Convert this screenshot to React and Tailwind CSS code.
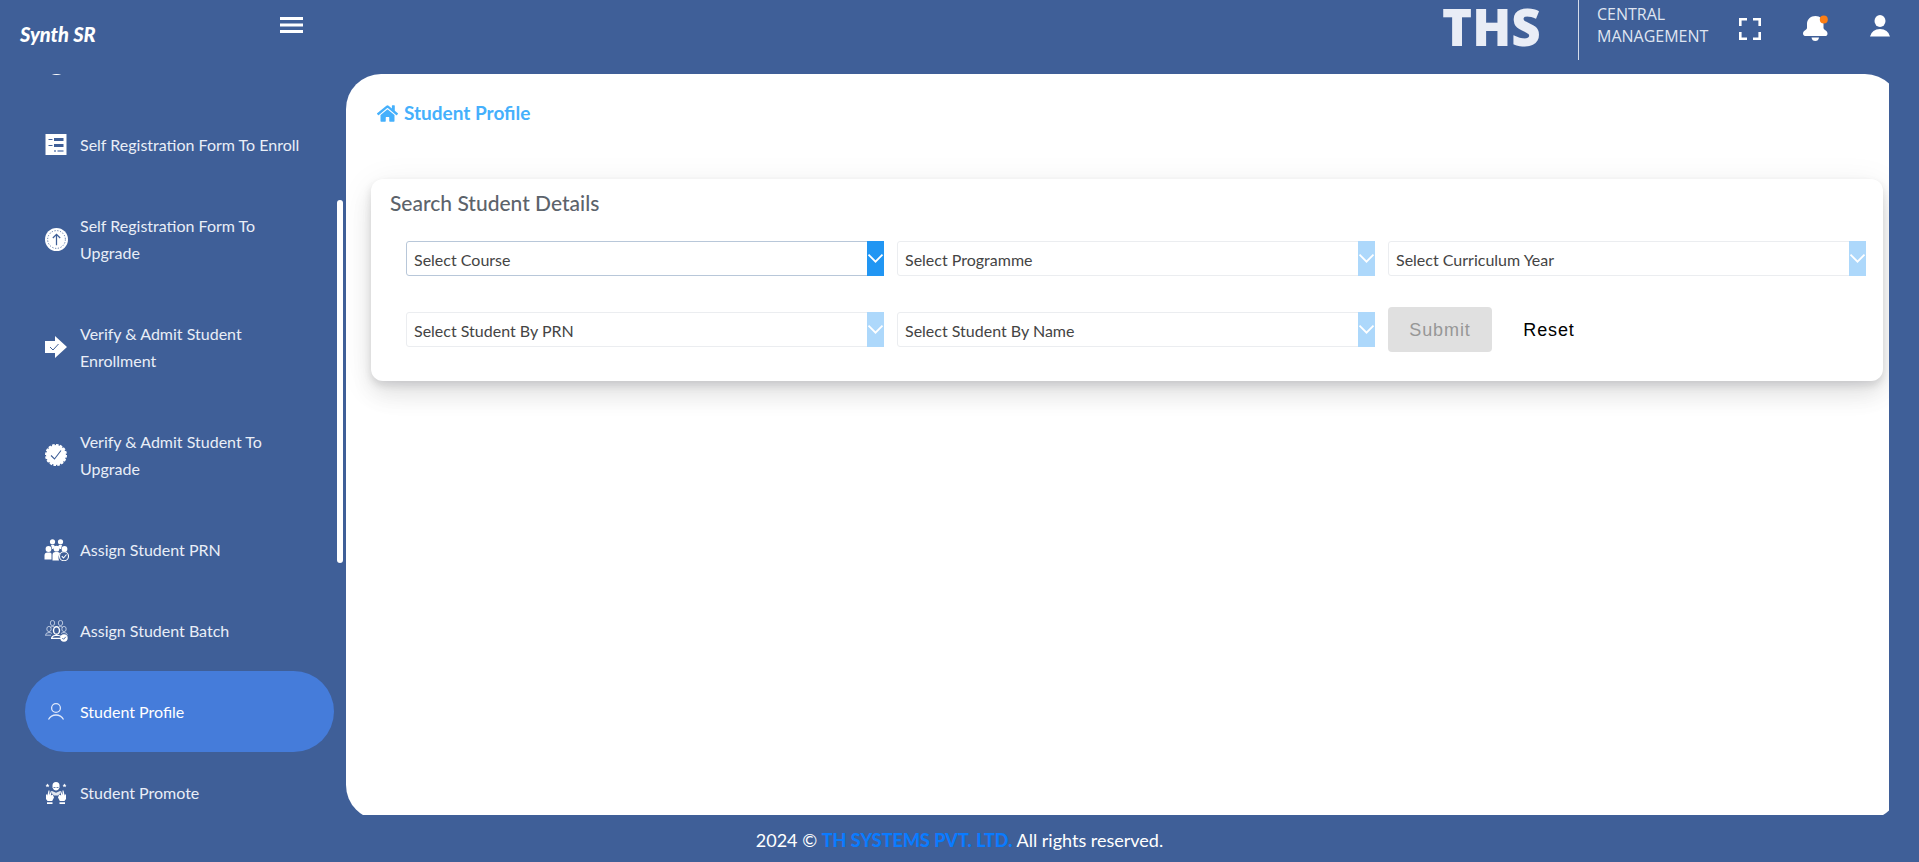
import React, { useState } from 'react';
import { FaHome } from 'react-icons/fa';

const font = "font-['Lato','Open_Sans',sans-serif]";

// Sidebar icons
const FormIcon = () => (
    <svg className="w-[22px] h-[22px] shrink-0" viewBox="0 0 22 22">
        <path fill="#fff" d="M.5 0h21v21H.5z" />
        <path stroke="#3f5f98" strokeWidth="1.2" d="M3.500 5.500h4M3.500 11.500h4" />
        <path stroke="#3f5f98" strokeWidth="3" d="M9 5.500h9.500M9 11.500h9.500" />
        <path stroke="#8da2c8" strokeWidth="2" d="M9 17h2M12.500 17h6" />
    </svg>
);

const UpgradeIcon = () => (
    <svg className="w-[23px] h-[23px] shrink-0" viewBox="0 0 22 22" fill="none">
        <circle cx="11" cy="11" r="11" fill="#fff" />
        <circle cx="11" cy="11" r="8.5" stroke="#3f5f98" strokeWidth=".8" strokeDasharray="1.2 1.5" />
        <path stroke="#3f5f98" strokeWidth="1.2" d="M11 16.500V6.500M7.500 9.500L11 6l3.500 3.500" />
    </svg>
);

const ArrowCheckIcon = () => (
    <svg className="w-[22px] h-[22px] shrink-0" viewBox="0 0 22 22" fill="none">
        <path fill="#fff" d="M0 5h10V0l12 11-12 11v-5H0z" />
        <path stroke="#3f5f98" strokeWidth="1" d="M5 11l3 3 5.500-6" />
    </svg>
);

const BadgeCheckIcon = () => (
    <svg className="w-[22px] h-[22px] shrink-0" viewBox="0 0 22 22" fill="none">
        <circle cx="11" cy="11" r="10" fill="#fff" />
        <circle cx="11" cy="11" r="10" stroke="#fff" strokeWidth="2" strokeDasharray="2.6 1.300" />
        <path stroke="#3f5f98" strokeWidth="1.1" d="M6 11.500l3.500 3.500 6.500-8.500" />
    </svg>
);

const GroupSolidIcon = () => (
    <svg className="-ml-px w-[25px] h-[22px] shrink-0" viewBox="0 0 24 22" fill="#fff">
        <circle cx="8" cy="2.800" r="2.600" />
        <circle cx="16" cy="2.800" r="2.600" />
        <path d="M6.500 6h3l1 1.500-1.800 2.500h-1zM14.500 6h3l-1 4h-1.200L13.500 7.500z" />
        <circle cx="4" cy="10" r="2.900" />
        <circle cx="12" cy="9.700" r="2.900" />
        <circle cx="20" cy="10" r="2.900" />
        <path d="M0 20.500v-4q0-3 3-3h2.500q1.500 0 1.500 1.500v5.500zM8 21.500V16q0-3 3-3h2q2 0 2.500 1.500-2.500 3-1 7z" />
        <circle cx="19.500" cy="17.200" r="4.500" fill="#3f5f98" stroke="#fff" strokeWidth="1.100" />
        <path fill="none" stroke="#fff" strokeWidth="1.100" d="M17.300 17.200l1.700 1.800 3-3.500" />
    </svg>
);

const GroupOutlineIcon = () => (
    <svg className="w-[23px] h-[22px] shrink-0" viewBox="0 0 23 22" fill="none" stroke="#c5d1e6" strokeWidth=".9">
        <ellipse cx="7.500" cy="3" rx="2.200" ry="2.600" />
        <ellipse cx="15.500" cy="3" rx="2.200" ry="2.600" />
        <path d="M5 7.500q2.500-2 4.500-.5M13.500 7q2-1.500 4.500.5" />
        <ellipse cx="4" cy="9" rx="2.200" ry="2.600" />
        <ellipse cx="19" cy="9" rx="2.200" ry="2.600" />
        <path d="M.5 15.500q0-3 3.500-3 2 0 3 1M.5 15.200H6M16 13.500q1-1 3-1 3 0 3.500 2.700" />
        <ellipse cx="11.500" cy="10.500" rx="3" ry="3.800" stroke="#fff" strokeWidth="1.400" />
        <path d="M6.500 18.500q.5-3 3.500-3h3.500q2 0 3 1.500M6 18.300h10" stroke="#fff" strokeWidth="1.200" />
        <circle cx="19" cy="18" r="3.700" fill="#fff" stroke="none" />
        <path stroke="#3f5f98" d="M17.300 18l1.300 1.300 2.200-2.500" />
    </svg>
);

const ProfileIcon = () => (
    <svg className="w-[22px] h-[22px] shrink-0" viewBox="0 0 22 22" fill="none" stroke="#dfe8fa" strokeWidth="1.300">
        <circle cx="11" cy="7" r="4.400" />
        <path d="M3.500 18.500Q6 14 11 14t7.500 4.500" />
    </svg>
);

const PromoteIcon = () => (
    <svg className="w-[22px] h-[22px] shrink-0" viewBox="0 0 22 22" fill="#fff">
        <path d="M7.500 3.500q0-3.500 3.500-3.500t3.500 3.500v2q-1 3-3.500 3t-3.500-3z" />
        <path stroke="#3f5f98" strokeWidth=".8" d="M8.500 5.500h2M11.500 5.500h2" />
        <path opacity=".85" d="M7 9l4 1.800L15 9l.5 2-2.500 2.500H9L6.500 11z" />
        <path d="M2.500 1.500l.6 1.200 1.400.2-1 .9.300 1.400-1.300-.7-1.200.7.200-1.400-1-.9 1.400-.2zM19.500 1.500l.6 1.200 1.400.2-1 .9.300 1.400-1.300-.7-1.200.7.200-1.400-1-.9 1.400-.2z" />
        <path d="M1 12.500h1.300V14L3.500 8.500h1L4.300 13 6 9h.8l-1 4.500 2-1 1.200 3-1.800 3.500H2.500L1 17zM21 12.500h-1.300V14l-1.200-5.500h-1l.2 4.500L16 9h-.8l1 4.500-2-1-1.200 3 1.800 3.500h4.700L21 17zM2 20.300h5.500V22H2zM14.500 20.300H20V22h-5.500z" />
    </svg>
);

const menuItems = [
    { label: 'Self Registration Form To Enroll', icon: FormIcon },
    { label: 'Self Registration Form To Upgrade', icon: UpgradeIcon },
    { label: 'Verify & Admit Student Enrollment', icon: ArrowCheckIcon },
    { label: 'Verify & Admit Student To Upgrade', icon: BadgeCheckIcon },
    { label: 'Assign Student PRN', icon: GroupSolidIcon },
    { label: 'Assign Student Batch', icon: GroupOutlineIcon },
    { label: 'Student Profile', icon: ProfileIcon, active: true },
    { label: 'Student Promote', icon: PromoteIcon },
];

function Header() {
    return (
        <header className="h-[74px] shrink-0 flex items-start justify-between text-white">
            <div className="w-[303px] pl-5 flex items-start justify-between">
                <span className="pt-5 text-xl leading-7 font-black italic">Synth SR</span>
                <button aria-label="Toggle menu" className="mt-[17px]">
                    <svg className="w-[23px] h-4" viewBox="0 0 23 16" stroke="#fff" strokeWidth="3">
                        <path d="M0 1.500h23M0 8h23M0 14.500h23" />
                    </svg>
                </button>
            </div>

            <div className="flex items-start pr-[29px]">
                <span className="w-[136px] font-['Open_Sans','Noto_Sans',sans-serif] text-[51px] leading-[52px] font-extrabold text-[#e9edf6]">THS</span>
                <div className="h-[60px] border-l border-[#d5dcea] pl-[18px] pt-[3px] w-[161px] font-['Open_Sans','Noto_Sans',sans-serif] text-base leading-[22px] text-[#dfe5f1]">
                    CENTRAL<br />MANAGEMENT
                </div>
                <button aria-label="Full screen" className="mt-[18px]">
                    <svg className="w-[22px] h-[22px]" viewBox="0 0 22 22" fill="none" stroke="#fff" strokeWidth="2.600">
                        <path d="M1.300 8V1.300H8M14 1.300h6.700V8M20.700 14v6.700H14M8 20.700H1.300V14" />
                    </svg>
                </button>
                <button aria-label="Notifications" className="mt-[15px] ml-[42px]">
                    <svg className="w-[25px] h-[26px]" viewBox="0 0 25 26">
                        <path fill="#fff" d="M12.500 1C7.500 1 4 4.500 4 9v4q0 1-1.500 2C1 16 0 17 0 18.500 0 20.500 1.500 21 3 21h19c1.500 0 2.500-.5 2.500-2.500 0-1.500-1-2.500-2.500-3.500q-1.500-1-1.500-2V9c0-4.500-3.500-8-8-8zM8.500 22.500h7.500q-.5 3.500-3.700 3.500t-3.800-3.500z" />
                        <circle cx="20.800" cy="4.500" r="4" fill="#fd7e14" />
                    </svg>
                </button>
                <button aria-label="Account" className="mt-[15px] ml-[42px]">
                    <svg className="w-5 h-[22px]" viewBox="0 0 20 22" fill="#fff">
                        <ellipse cx="10" cy="6" rx="5.500" ry="6" />
                        <path d="M0 21.500Q2 14 10 14t10 7.500z" />
                    </svg>
                </button>
            </div>
        </header>
    );
}

function Sidebar() {
    return (
        <aside className="w-[346px] shrink-0 flex justify-between overflow-hidden pr-[3px]">
            <nav className="-mt-[51px] pl-[25px]">
                {/* Scrolled under the header */}
                <a href="#" aria-label="Registration" className="w-[309px] h-[81px] pl-5 flex items-center">
                    <UpgradeIcon />
                </a>
                {menuItems.map(({ label, icon: Icon, active }) => (
                    <a
                        key={label}
                        href="#"
                        className={`w-[309px] pl-5 pr-5 py-[27px] flex items-center rounded-[41px] text-base leading-[27px] ${active ? 'bg-[#457cda] text-white' : 'text-[#e9eef7]'}`}
                    >
                        <span className="w-[35px] shrink-0"><Icon /></span>
                        <span>{label}</span>
                    </a>
                ))}
            </nav>
            {/* Scroll thumb */}
            <div className="mt-[126px] w-[6px] h-[363px] shrink-0 rounded-full bg-white" />
        </aside>
    );
}

function SelectField({ id, label, disabled }) {
    return (
        <div className="relative h-[35px]">
            <select
                id={id}
                aria-label={label}
                disabled={disabled}
                className={`block w-full h-full appearance-none rounded-[3px] border bg-white pl-[7px] pr-6 pt-[3px] text-base leading-5 text-[#444] opacity-100 ${disabled ? 'border-[#ebedf0]' : 'border-[#b8c7d9]'}`}
            >
                <option>{label}</option>
            </select>
            <span className={`absolute right-0 top-0 h-full w-[17px] flex items-center pointer-events-none ${disabled ? 'bg-[#add8fb]' : 'bg-[#2196f3]'}`}>
                <svg className="w-[17px] h-[9px]" viewBox="0 0 17 9" fill="none" stroke="#fff" strokeWidth="1.800">
                    <path d="M1.500 .7l7 7 7-7" />
                </svg>
            </span>
        </div>
    );
}

function SearchCard() {
    const [submitted, setSubmitted] = useState(false);

    return (
        <form
            onSubmit={(e) => { e.preventDefault(); setSubmitted(true); }}
            onReset={() => setSubmitted(false)}
            data-submitted={submitted}
            className="rounded-[12px] bg-white pt-2 pb-[34px] pl-[19px] pr-[17px] shadow-[0_7px_35px_rgba(4,9,20,0.08),0_15px_22px_rgba(4,9,20,0.07),0_4px_9px_rgba(4,9,20,0.12)]"
        >
            <h2 className="text-[21px] leading-8 font-medium text-[#5c636b]">Search Student Details</h2>
            <div className="mt-[22px] pl-4 grid grid-cols-3 gap-x-[13px] gap-y-9 items-center">
                <SelectField id="course" label="Select Course" />
                <SelectField id="programme" label="Select Programme" disabled />
                <SelectField id="year" label="Select Curriculum Year" disabled />
                <SelectField id="prn" label="Select Student By PRN" disabled />
                <SelectField id="name" label="Select Student By Name" disabled />
                <div className="-my-[5px] flex font-['Liberation_Sans',Arial,sans-serif] text-lg tracking-wider">
                    <button type="submit" disabled className="w-[104px] h-[45px] rounded-[4px] bg-[#e0e0e0] text-[#979797]">Submit</button>
                    <button type="reset" className="w-[114px] h-[45px] text-black">Reset</button>
                </div>
            </div>
        </form>
    );
}

export default function App() {
    return (
        <div className={`h-screen flex flex-col overflow-hidden bg-[#3f5f98] ${font}`}>
            <Header />

            <div className="flex-1 min-h-0 flex pr-[30px]">
                <Sidebar />
                <main className="flex-1 min-w-0 flex overflow-hidden">
                    <div className="flex-1 min-w-0 -mr-[11px] -mb-[5px] rounded-[35px] overflow-hidden bg-white pt-[25px] pl-[25px] pr-[17px]">
                        <h1 className="ml-[6px] flex items-center gap-[6px] text-[19px] leading-7 font-bold text-[#45b0fc]">
                            <FaHome className="w-[21px] h-[21px]" />
                            Student Profile
                        </h1>
                        <div className="mt-[52px]">
                            <SearchCard />
                        </div>
                    </div>
                </main>
            </div>

            <footer className="h-[47px] shrink-0 pt-3 text-center text-lg leading-[26px] text-white">
                2024 © <a href="#" className="font-black text-[#0a7bff]">TH SYSTEMS PVT. LTD.</a> All rights reserved.
            </footer>
        </div>
    );
}
